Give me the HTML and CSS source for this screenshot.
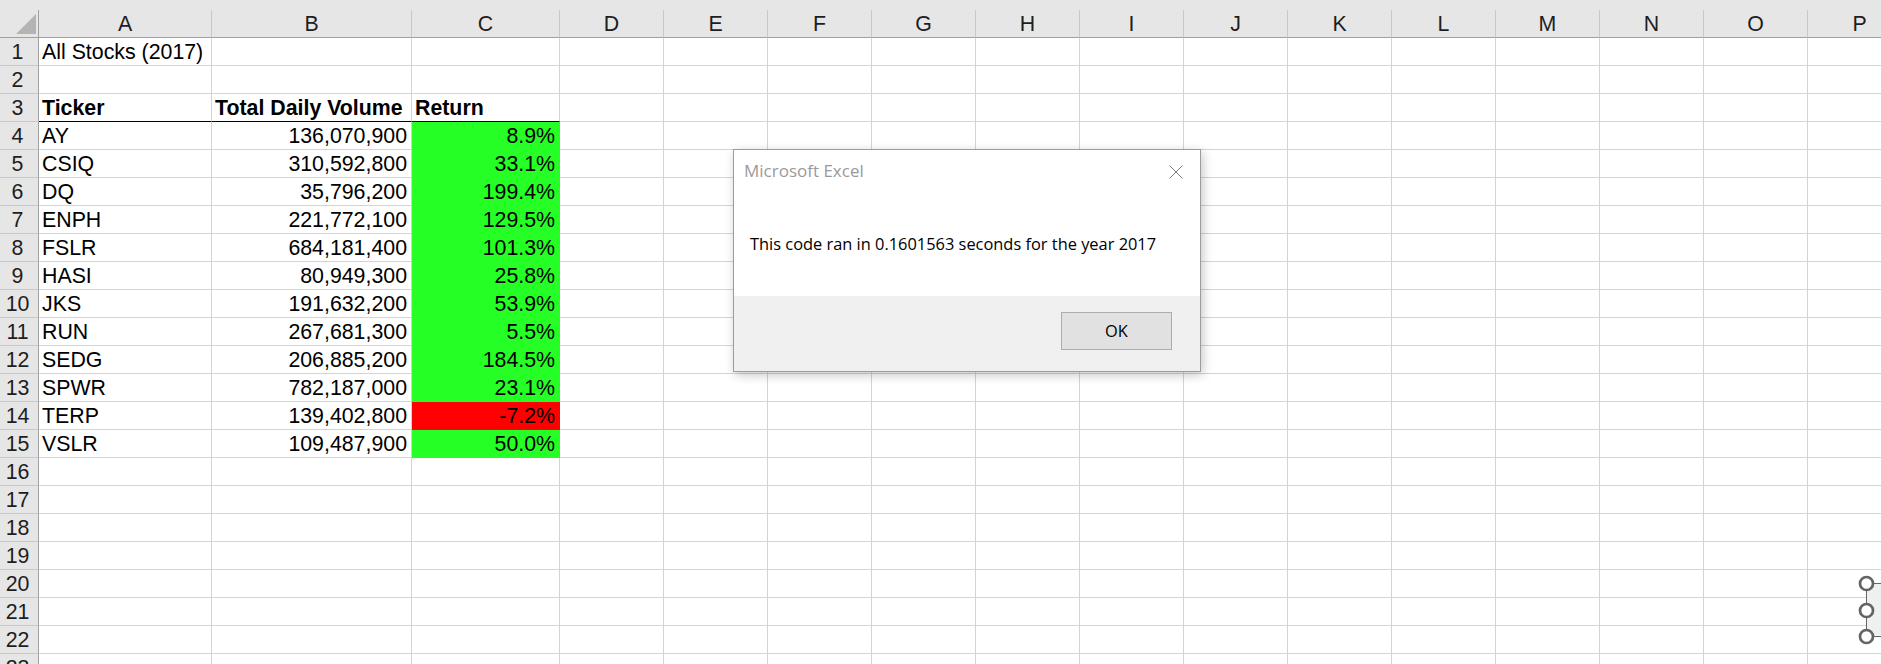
FILE: index.html
```html
<!DOCTYPE html>
<html lang="en">
<head>
<meta charset="utf-8">
<title>All Stocks (2017) - Excel</title>
<link rel="stylesheet" href="styles.css">
</head>
<body>
<div class="sheet">
  <div class="strip"></div>
  <div class="row hdr">
    <span class="corner"><svg class="tri" width="20" height="20" viewBox="0 0 20 20"><polygon points="0,20 20,20 20,0" fill="#b4b4b4"/></svg></span>
    <span class="ch ca">A</span><span class="ch cb">B</span><span class="ch cc">C</span><span class="ch">D</span><span class="ch">E</span><span class="ch">F</span><span class="ch">G</span><span class="ch">H</span><span class="ch">I</span><span class="ch">J</span><span class="ch">K</span><span class="ch">L</span><span class="ch">M</span><span class="ch">N</span><span class="ch">O</span><span class="ch">P</span>
  </div>
  <div class="row"><span class="rh">1</span><span class="c ca">All Stocks (2017)</span><span class="c cb"></span><span class="c cc"></span><span class="c"></span><span class="c"></span><span class="c"></span><span class="c"></span><span class="c"></span><span class="c"></span><span class="c"></span><span class="c"></span><span class="c"></span><span class="c"></span><span class="c"></span><span class="c"></span><span class="c"></span></div>
  <div class="row"><span class="rh">2</span><span class="c ca"></span><span class="c cb"></span><span class="c cc"></span><span class="c"></span><span class="c"></span><span class="c"></span><span class="c"></span><span class="c"></span><span class="c"></span><span class="c"></span><span class="c"></span><span class="c"></span><span class="c"></span><span class="c"></span><span class="c"></span><span class="c"></span></div>
  <div class="row"><span class="rh">3</span><span class="c ca th">Ticker</span><span class="c cb th">Total Daily Volume</span><span class="c cc th">Return</span><span class="c"></span><span class="c"></span><span class="c"></span><span class="c"></span><span class="c"></span><span class="c"></span><span class="c"></span><span class="c"></span><span class="c"></span><span class="c"></span><span class="c"></span><span class="c"></span><span class="c"></span></div>
  <div class="row"><span class="rh">4</span><span class="c ca">AY</span><span class="c cb num">136,070,900</span><span class="c cc num up">8.9%</span><span class="c"></span><span class="c"></span><span class="c"></span><span class="c"></span><span class="c"></span><span class="c"></span><span class="c"></span><span class="c"></span><span class="c"></span><span class="c"></span><span class="c"></span><span class="c"></span><span class="c"></span></div>
  <div class="row"><span class="rh">5</span><span class="c ca">CSIQ</span><span class="c cb num">310,592,800</span><span class="c cc num up">33.1%</span><span class="c"></span><span class="c"></span><span class="c"></span><span class="c"></span><span class="c"></span><span class="c"></span><span class="c"></span><span class="c"></span><span class="c"></span><span class="c"></span><span class="c"></span><span class="c"></span><span class="c"></span></div>
  <div class="row"><span class="rh">6</span><span class="c ca">DQ</span><span class="c cb num">35,796,200</span><span class="c cc num up">199.4%</span><span class="c"></span><span class="c"></span><span class="c"></span><span class="c"></span><span class="c"></span><span class="c"></span><span class="c"></span><span class="c"></span><span class="c"></span><span class="c"></span><span class="c"></span><span class="c"></span><span class="c"></span></div>
  <div class="row"><span class="rh">7</span><span class="c ca">ENPH</span><span class="c cb num">221,772,100</span><span class="c cc num up">129.5%</span><span class="c"></span><span class="c"></span><span class="c"></span><span class="c"></span><span class="c"></span><span class="c"></span><span class="c"></span><span class="c"></span><span class="c"></span><span class="c"></span><span class="c"></span><span class="c"></span><span class="c"></span></div>
  <div class="row"><span class="rh">8</span><span class="c ca">FSLR</span><span class="c cb num">684,181,400</span><span class="c cc num up">101.3%</span><span class="c"></span><span class="c"></span><span class="c"></span><span class="c"></span><span class="c"></span><span class="c"></span><span class="c"></span><span class="c"></span><span class="c"></span><span class="c"></span><span class="c"></span><span class="c"></span><span class="c"></span></div>
  <div class="row"><span class="rh">9</span><span class="c ca">HASI</span><span class="c cb num">80,949,300</span><span class="c cc num up">25.8%</span><span class="c"></span><span class="c"></span><span class="c"></span><span class="c"></span><span class="c"></span><span class="c"></span><span class="c"></span><span class="c"></span><span class="c"></span><span class="c"></span><span class="c"></span><span class="c"></span><span class="c"></span></div>
  <div class="row"><span class="rh">10</span><span class="c ca">JKS</span><span class="c cb num">191,632,200</span><span class="c cc num up">53.9%</span><span class="c"></span><span class="c"></span><span class="c"></span><span class="c"></span><span class="c"></span><span class="c"></span><span class="c"></span><span class="c"></span><span class="c"></span><span class="c"></span><span class="c"></span><span class="c"></span><span class="c"></span></div>
  <div class="row"><span class="rh">11</span><span class="c ca">RUN</span><span class="c cb num">267,681,300</span><span class="c cc num up">5.5%</span><span class="c"></span><span class="c"></span><span class="c"></span><span class="c"></span><span class="c"></span><span class="c"></span><span class="c"></span><span class="c"></span><span class="c"></span><span class="c"></span><span class="c"></span><span class="c"></span><span class="c"></span></div>
  <div class="row"><span class="rh">12</span><span class="c ca">SEDG</span><span class="c cb num">206,885,200</span><span class="c cc num up">184.5%</span><span class="c"></span><span class="c"></span><span class="c"></span><span class="c"></span><span class="c"></span><span class="c"></span><span class="c"></span><span class="c"></span><span class="c"></span><span class="c"></span><span class="c"></span><span class="c"></span><span class="c"></span></div>
  <div class="row"><span class="rh">13</span><span class="c ca">SPWR</span><span class="c cb num">782,187,000</span><span class="c cc num up">23.1%</span><span class="c"></span><span class="c"></span><span class="c"></span><span class="c"></span><span class="c"></span><span class="c"></span><span class="c"></span><span class="c"></span><span class="c"></span><span class="c"></span><span class="c"></span><span class="c"></span><span class="c"></span></div>
  <div class="row"><span class="rh">14</span><span class="c ca">TERP</span><span class="c cb num">139,402,800</span><span class="c cc num down">-7.2%</span><span class="c"></span><span class="c"></span><span class="c"></span><span class="c"></span><span class="c"></span><span class="c"></span><span class="c"></span><span class="c"></span><span class="c"></span><span class="c"></span><span class="c"></span><span class="c"></span><span class="c"></span></div>
  <div class="row"><span class="rh">15</span><span class="c ca">VSLR</span><span class="c cb num">109,487,900</span><span class="c cc num up">50.0%</span><span class="c"></span><span class="c"></span><span class="c"></span><span class="c"></span><span class="c"></span><span class="c"></span><span class="c"></span><span class="c"></span><span class="c"></span><span class="c"></span><span class="c"></span><span class="c"></span><span class="c"></span></div>
  <div class="row"><span class="rh">16</span><span class="c ca"></span><span class="c cb"></span><span class="c cc"></span><span class="c"></span><span class="c"></span><span class="c"></span><span class="c"></span><span class="c"></span><span class="c"></span><span class="c"></span><span class="c"></span><span class="c"></span><span class="c"></span><span class="c"></span><span class="c"></span><span class="c"></span></div>
  <div class="row"><span class="rh">17</span><span class="c ca"></span><span class="c cb"></span><span class="c cc"></span><span class="c"></span><span class="c"></span><span class="c"></span><span class="c"></span><span class="c"></span><span class="c"></span><span class="c"></span><span class="c"></span><span class="c"></span><span class="c"></span><span class="c"></span><span class="c"></span><span class="c"></span></div>
  <div class="row"><span class="rh">18</span><span class="c ca"></span><span class="c cb"></span><span class="c cc"></span><span class="c"></span><span class="c"></span><span class="c"></span><span class="c"></span><span class="c"></span><span class="c"></span><span class="c"></span><span class="c"></span><span class="c"></span><span class="c"></span><span class="c"></span><span class="c"></span><span class="c"></span></div>
  <div class="row"><span class="rh">19</span><span class="c ca"></span><span class="c cb"></span><span class="c cc"></span><span class="c"></span><span class="c"></span><span class="c"></span><span class="c"></span><span class="c"></span><span class="c"></span><span class="c"></span><span class="c"></span><span class="c"></span><span class="c"></span><span class="c"></span><span class="c"></span><span class="c"></span></div>
  <div class="row"><span class="rh">20</span><span class="c ca"></span><span class="c cb"></span><span class="c cc"></span><span class="c"></span><span class="c"></span><span class="c"></span><span class="c"></span><span class="c"></span><span class="c"></span><span class="c"></span><span class="c"></span><span class="c"></span><span class="c"></span><span class="c"></span><span class="c"></span><span class="c"></span></div>
  <div class="row"><span class="rh">21</span><span class="c ca"></span><span class="c cb"></span><span class="c cc"></span><span class="c"></span><span class="c"></span><span class="c"></span><span class="c"></span><span class="c"></span><span class="c"></span><span class="c"></span><span class="c"></span><span class="c"></span><span class="c"></span><span class="c"></span><span class="c"></span><span class="c"></span></div>
  <div class="row"><span class="rh">22</span><span class="c ca"></span><span class="c cb"></span><span class="c cc"></span><span class="c"></span><span class="c"></span><span class="c"></span><span class="c"></span><span class="c"></span><span class="c"></span><span class="c"></span><span class="c"></span><span class="c"></span><span class="c"></span><span class="c"></span><span class="c"></span><span class="c"></span></div>
  <div class="row"><span class="rh">23</span><span class="c ca"></span><span class="c cb"></span><span class="c cc"></span><span class="c"></span><span class="c"></span><span class="c"></span><span class="c"></span><span class="c"></span><span class="c"></span><span class="c"></span><span class="c"></span><span class="c"></span><span class="c"></span><span class="c"></span><span class="c"></span><span class="c"></span></div>

  <div class="dialog">
    <div class="dlg-body">
      <div class="dlg-title">Microsoft Excel</div>
      <svg class="dlg-close" width="14" height="14" viewBox="0 0 14 14"><path d="M0.5 0.5 L13.5 13.5 M13.5 0.5 L0.5 13.5" stroke="#7a7a7a" stroke-width="1" fill="none"/></svg>
      <div class="dlg-msg">This code ran in 0.1601563 seconds for the year 2017</div>
    </div>
    <div class="dlg-foot">
      <button class="dlg-btn" type="button">OK</button>
    </div>
  </div>

  <svg class="handles" width="31" height="80" viewBox="0 0 31 80">
    <rect x="16.5" y="13.5" width="30" height="53" fill="#f0f0f0" stroke="#646464" stroke-width="1"/>
    <circle cx="16.5" cy="13.5" r="6.5" fill="#fff" stroke="#646464" stroke-width="2.7"/>
    <circle cx="16.5" cy="40.5" r="6.5" fill="#fff" stroke="#646464" stroke-width="2.7"/>
    <circle cx="16.5" cy="66.5" r="6.5" fill="#fff" stroke="#646464" stroke-width="2.7"/>
  </svg>
</div>
</body>
</html>
```

FILE: styles.css
```css
html, body {
  margin: 0;
  padding: 0;
  background: #fff;
}

.sheet {
  position: relative;
  width: 1881px;
  height: 664px;
  overflow: hidden;
  background: #fff;
  font-family: "Liberation Sans", Arial, sans-serif;
  font-size: 21.33px;
  color: #000;
}

.strip {
  height: 10px;
  background: #e6e6e6;
}

.row {
  display: flex;
  width: max-content;
}

.row > span {
  flex: 0 0 auto;
  box-sizing: border-box;
  height: 28px;
  padding-top: 2px;
  line-height: 25px;
  white-space: nowrap;
}

.corner {
  width: 39px;
  background: #e6e6e6;
  border-right: 1px solid #a0a0a0;
  border-bottom: 1px solid #a0a0a0;
  display: flex;
  justify-content: flex-end;
  align-items: flex-end;
  padding: 0 2px 3px 0;
}

.row > .corner {
  padding-top: 0;
  padding-bottom: 3px;
}

.tri {
  display: block;
}

.ch {
  width: 104px;
  background: #e6e6e6;
  border-right: 1px solid #c8c8c8;
  border-bottom: 1px solid #a0a0a0;
  text-align: center;
  color: #1e1e1e;
}

.rh {
  width: 39px;
  background: #e6e6e6;
  border-right: 1px solid #a0a0a0;
  border-bottom: 1px solid #c8c8c8;
  text-align: center;
  padding-right: 3px;
  color: #1e1e1e;
}

.c {
  width: 104px;
  border-right: 1px solid #d4d4d4;
  border-bottom: 1px solid #d4d4d4;
  padding-left: 3px;
  padding-right: 4px;
}

.ca { width: 173px; }
.cb { width: 200px; }
.cc { width: 148px; }

.th {
  font-weight: bold;
  border-bottom-color: #000;
}

.num {
  text-align: right;
}

.up {
  background: #26ff26;
  border-right-color: #26ff26;
  border-bottom-color: #26ff26;
}

.down {
  background: #ff0000;
  border-right-color: #ff0000;
  border-bottom-color: #ff0000;
}

/* Message box */
.dialog {
  position: absolute;
  left: 733px;
  top: 149px;
  width: 468px;
  height: 223px;
  box-sizing: border-box;
  border: 1px solid #9c9c9c;
  background: #fff;
  box-shadow: 2px 3px 10px rgba(0, 0, 0, 0.22);
  font-family: "Open Sans", "Noto Sans", sans-serif;
}

.dlg-body {
  position: relative;
  height: 146px;
  box-sizing: border-box;
  padding: 11px 0 0 10px;
}

.dlg-title {
  font-size: 17px;
  line-height: 20px;
  color: #9a9a9a;
}

.dlg-close {
  position: absolute;
  left: 435px;
  top: 15px;
  display: block;
}

.dlg-msg {
  margin-top: 53px;
  padding-left: 6px;
  font-size: 16.4px;
  line-height: 20px;
  color: #000;
  white-space: nowrap;
}

.dlg-foot {
  height: 75px;
  box-sizing: border-box;
  background: #f0f0f0;
  display: flex;
  justify-content: flex-end;
  align-items: flex-start;
  padding: 16px 28px 0 0;
}

.dlg-btn {
  width: 111px;
  height: 38px;
  box-sizing: border-box;
  margin: 0;
  padding: 0;
  border: 1px solid #adadad;
  background: #e1e1e1;
  font-family: "Open Sans", "Noto Sans", sans-serif;
  font-size: 16.4px;
  line-height: 36px;
  color: #000;
  text-align: center;
}

.handles {
  position: absolute;
  left: 1850px;
  top: 570px;
  display: block;
}
```
